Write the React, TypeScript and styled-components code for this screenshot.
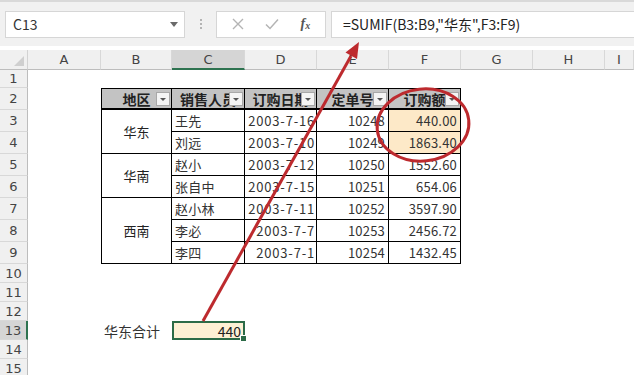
import styled, { createGlobalStyle } from "styled-components";

const GlobalStyle = createGlobalStyle`
  html, body {
    margin: 0;
    padding: 0;
    background: #ffffff;
    overflow: hidden;
  }
  body {
    font-family: "Noto Sans CJK SC", "Noto Sans", sans-serif;
    color: #222;
  }
`;

const COLS = ["A", "B", "C", "D", "E", "F", "G", "H", "I"];
const COL_WIDTHS = [73, 71, 73, 72, 72, 72, 72, 72];
const ROWS = Array.from({ length: 15 }, (_, i) => i + 1);

const headFont = `"DejaVu Sans", "Noto Sans CJK SC", sans-serif`;

type Row = {
  region?: string;
  span?: number;
  name: string;
  date: string;
  id: string;
  amount: string;
  hot?: boolean;
};

const rows: Row[] = [
  { region: "华东", span: 2, name: "王先", date: "2003-7-16", id: "10248", amount: "440.00", hot: true },
  { name: "刘远", date: "2003-7-10", id: "10249", amount: "1863.40", hot: true },
  { region: "华南", span: 2, name: "赵小", date: "2003-7-12", id: "10250", amount: "1552.60" },
  { name: "张自中", date: "2003-7-15", id: "10251", amount: "654.06" },
  { region: "西南", span: 3, name: "赵小林", date: "2003-7-11", id: "10252", amount: "3597.90" },
  { name: "李必", date: "2003-7-7", id: "10253", amount: "2456.72" },
  { name: "李四", date: "2003-7-1", id: "10254", amount: "1432.45" },
];

const headers = ["地区", "销售人员", "订购日期", "定单号", "订购额"];

const App = () => {
  return (
    <Page>
      <GlobalStyle />
      <Toolbar>
        <NameBox>
          <span>C13</span>
          <Caret />
        </NameBox>
        <Grip>
          <i />
          <i />
          <i />
        </Grip>
        <FxGroup>
          <FxIcon>
            <svg width="12" height="12" viewBox="0 0 12 12">
              <path d="M1 1 L11 11 M11 1 L1 11" stroke="#b4b4b4" strokeWidth="1.4" fill="none" />
            </svg>
          </FxIcon>
          <FxIcon>
            <svg width="14" height="12" viewBox="0 0 14 12">
              <path d="M1 6.5 L5 10.5 L13 1.5" stroke="#b4b4b4" strokeWidth="1.5" fill="none" />
            </svg>
          </FxIcon>
          <FxLabel>
            f<sub>x</sub>
          </FxLabel>
        </FxGroup>
        <Formula>=SUMIF(B3:B9,"华东",F3:F9)</Formula>
      </Toolbar>

      <Sheet>
        <Corner />
        {COLS.map((c) => (
          <ColHead key={c} $active={c === "C"}>
            {c}
          </ColHead>
        ))}
        {ROWS.map((r) => (
          <RowHead key={r} style={{ gridRow: r + 1 }} $active={r === 13}>
            {r}
          </RowHead>
        ))}

        <Table>
          {headers.map((h, i) => (
            <HeadCell key={h} $first={i === 0}>
              <HeadText>{h}</HeadText>
              <Filter />
            </HeadCell>
          ))}
          {rows.map((row, i) => (
            <>
              {row.region && (
                <RegionCell key={"r" + i} style={{ gridRow: `${i + 2} / span ${row.span}` }}>
                  {row.region}
                </RegionCell>
              )}
              <Cell key={"n" + i} style={{ gridRow: i + 2, gridColumn: 2 }}>
                {row.name}
              </Cell>
              <Cell key={"d" + i} $right $spaced style={{ gridRow: i + 2, gridColumn: 3 }}>
                {row.date}
              </Cell>
              <Cell key={"i" + i} $right style={{ gridRow: i + 2, gridColumn: 4 }}>
                {row.id}
              </Cell>
              <Cell key={"a" + i} $right $hot={row.hot} style={{ gridRow: i + 2, gridColumn: 5 }}>
                {row.amount}
              </Cell>
            </>
          ))}
        </Table>

        <Label>华东合计</Label>
        <Selected>
          440
          <Handle />
        </Selected>
      </Sheet>

      <Overlay width="634" height="375" viewBox="0 0 634 375">
        <ellipse
          cx="423"
          cy="125"
          rx="46"
          ry="36"
          fill="none"
          stroke="#bd2a2e"
          strokeWidth="3"
          transform="rotate(-6 423 125)"
        />
        <line x1="203" y1="321" x2="351" y2="56" stroke="#bd2a2e" strokeWidth="3" />
        <polygon points="359,42 357,59 345.5,52.5" fill="#bd2a2e" />
      </Overlay>
    </Page>
  );
};

export default App;

const Page = styled.div`
  position: relative;
  width: 634px;
  height: 375px;
  overflow: hidden;
  background: #fff;
`;

const Toolbar = styled.div`
  height: 46px;
  box-sizing: border-box;
  border-top: 2px solid #d9d9d9;
  background: #f1f1f1;
  display: flex;
  align-items: center;
  padding: 0 0 0 5px;
  margin-bottom: 4px;
`;

const NameBox = styled.div`
  width: 180px;
  height: 27px;
  box-sizing: border-box;
  background: #fff;
  border: 1px solid #d6d6d6;
  display: flex;
  align-items: center;
  justify-content: space-between;
  padding: 0 6px 0 7px;
  font-size: 14px;
  color: #333;
`;

const Caret = styled.span`
  width: 0;
  height: 0;
  border-left: 4px solid transparent;
  border-right: 4px solid transparent;
  border-top: 5px solid #6a6a6a;
`;

const Grip = styled.div`
  width: 31px;
  display: flex;
  flex-direction: column;
  align-items: center;
  gap: 2px;

  i {
    width: 2px;
    height: 2px;
    background: #b4b4b4;
  }
`;

const FxGroup = styled.div`
  width: 110px;
  height: 27px;
  box-sizing: border-box;
  background: #fff;
  border: 1px solid #d6d6d6;
  display: flex;
  align-items: center;
  justify-content: space-around;
  padding: 0 4px;
`;

const FxIcon = styled.span`
  display: flex;
  align-items: center;
`;

const FxLabel = styled.span`
  font-family: "Liberation Serif", serif;
  font-style: italic;
  font-weight: bold;
  font-size: 14px;
  color: #555;

  sub {
    font-size: 10px;
    vertical-align: -1px;
  }
`;

const Formula = styled.div`
  flex: 1;
  height: 27px;
  box-sizing: border-box;
  margin-left: 5px;
  background: #fff;
  border: 1px solid #d6d6d6;
  border-right: none;
  display: flex;
  align-items: center;
  padding-left: 11px;
  font-size: 14px;
  color: #222;
`;

const Sheet = styled.div`
  display: grid;
  grid-template-columns: 28px ${COL_WIDTHS.map((w) => w + "px").join(" ")} 1fr;
  grid-template-rows: 20px 18px repeat(8, 22px) repeat(6, 19px);
  background: #fff;
`;

const Corner = styled.div`
  grid-row: 1;
  grid-column: 1;
  background: #f0f0f0;
  border-right: 1px solid #d2d2d2;
  border-bottom: 1px solid #bdbdbd;
  position: relative;

  &::after {
    content: "";
    position: absolute;
    right: 3px;
    bottom: 3px;
    border-left: 10px solid transparent;
    border-bottom: 10px solid #cfcfcf;
  }
`;

const ColHead = styled.div<{ $active?: boolean }>`
  grid-row: 1;
  background: ${(p) => (p.$active ? "#d5d5d5" : "#f0f0f0")};
  border-right: 1px solid #d8d8d8;
  border-bottom: ${(p) => (p.$active ? "2px solid #2e7350" : "1px solid #bdbdbd")};
  box-sizing: border-box;
  display: flex;
  align-items: center;
  justify-content: center;
  font-family: ${headFont};
  font-size: 13px;
  color: #444;
`;

const RowHead = styled.div<{ $active?: boolean }>`
  grid-column: 1;
  background: ${(p) => (p.$active ? "#d5d5d5" : "#f0f0f0")};
  border-bottom: 1px solid #d8d8d8;
  border-right: ${(p) => (p.$active ? "2px solid #2e7350" : "1px solid #bdbdbd")};
  box-sizing: border-box;
  display: flex;
  align-items: center;
  justify-content: center;
  font-family: ${headFont};
  font-size: 13px;
  color: #444;
  line-height: 1;
`;

const Table = styled.div`
  grid-column: 3 / 8;
  grid-row: 3 / 11;
  display: grid;
  grid-template-columns: 71px 73px 72px 72px 72px;
  grid-template-rows: repeat(8, 22px);
  font-size: 13px;
`;

const HeadCell = styled.div<{ $first?: boolean }>`
  grid-row: 1;
  position: relative;
  box-sizing: border-box;
  background: #c3c3c3;
  border-top: 1px solid #000;
  border-right: 1px solid #000;
  border-bottom: 2px solid #000;
  border-left: ${(p) => (p.$first ? "1px solid #000" : "none")};
  display: flex;
  align-items: center;
  justify-content: center;
  overflow: hidden;
`;

const HeadText = styled.span`
  white-space: nowrap;
  font-weight: bold;
  font-size: 14px;
  color: #222;
`;

const Filter = styled.span`
  position: absolute;
  right: 1px;
  top: 3px;
  width: 14px;
  height: 14px;
  box-sizing: border-box;
  background: #f4f4f4;
  border: 1px solid #a8a8a8;
  display: flex;
  align-items: center;
  justify-content: center;

  &::after {
    content: "";
    border-left: 3px solid transparent;
    border-right: 3px solid transparent;
    border-top: 3px solid #555;
  }
`;

const Cell = styled.div<{ $right?: boolean; $hot?: boolean; $spaced?: boolean }>`
  box-sizing: border-box;
  border-right: 1px solid #000;
  border-bottom: 1px solid #000;
  background: ${(p) => (p.$hot ? "#fde9c8" : "#fff")};
  display: flex;
  align-items: center;
  justify-content: ${(p) => (p.$right ? "flex-end" : "flex-start")};
  padding: 0 ${(p) => (p.$spaced ? "1px" : "3px")} 0 3px;
  letter-spacing: ${(p) => (p.$spaced ? "0.8px" : "0.2px")};
  white-space: nowrap;
  overflow: hidden;
  color: #333;
`;

const RegionCell = styled.div`
  grid-column: 1;
  box-sizing: border-box;
  border-left: 1px solid #000;
  border-right: 1px solid #000;
  border-bottom: 1px solid #000;
  display: flex;
  align-items: center;
  justify-content: center;
  color: #222;
`;

const Label = styled.div`
  grid-column: 3;
  grid-row: 14;
  display: flex;
  align-items: center;
  padding-left: 3px;
  font-size: 14px;
  color: #333;
`;

const Selected = styled.div`
  grid-column: 4;
  grid-row: 14;
  position: relative;
  box-sizing: border-box;
  border: 2px solid #2c6b47;
  background: #fdf0d4;
  display: flex;
  align-items: center;
  justify-content: flex-end;
  padding-right: 2px;
  font-size: 14px;
  color: #222;
`;

const Handle = styled.span`
  position: absolute;
  right: -4px;
  bottom: -4px;
  width: 5px;
  height: 5px;
  background: #2c6b47;
  border: 1px solid #fff;
`;

const Overlay = styled.svg`
  position: absolute;
  left: 0;
  top: 0;
  pointer-events: none;
`;
